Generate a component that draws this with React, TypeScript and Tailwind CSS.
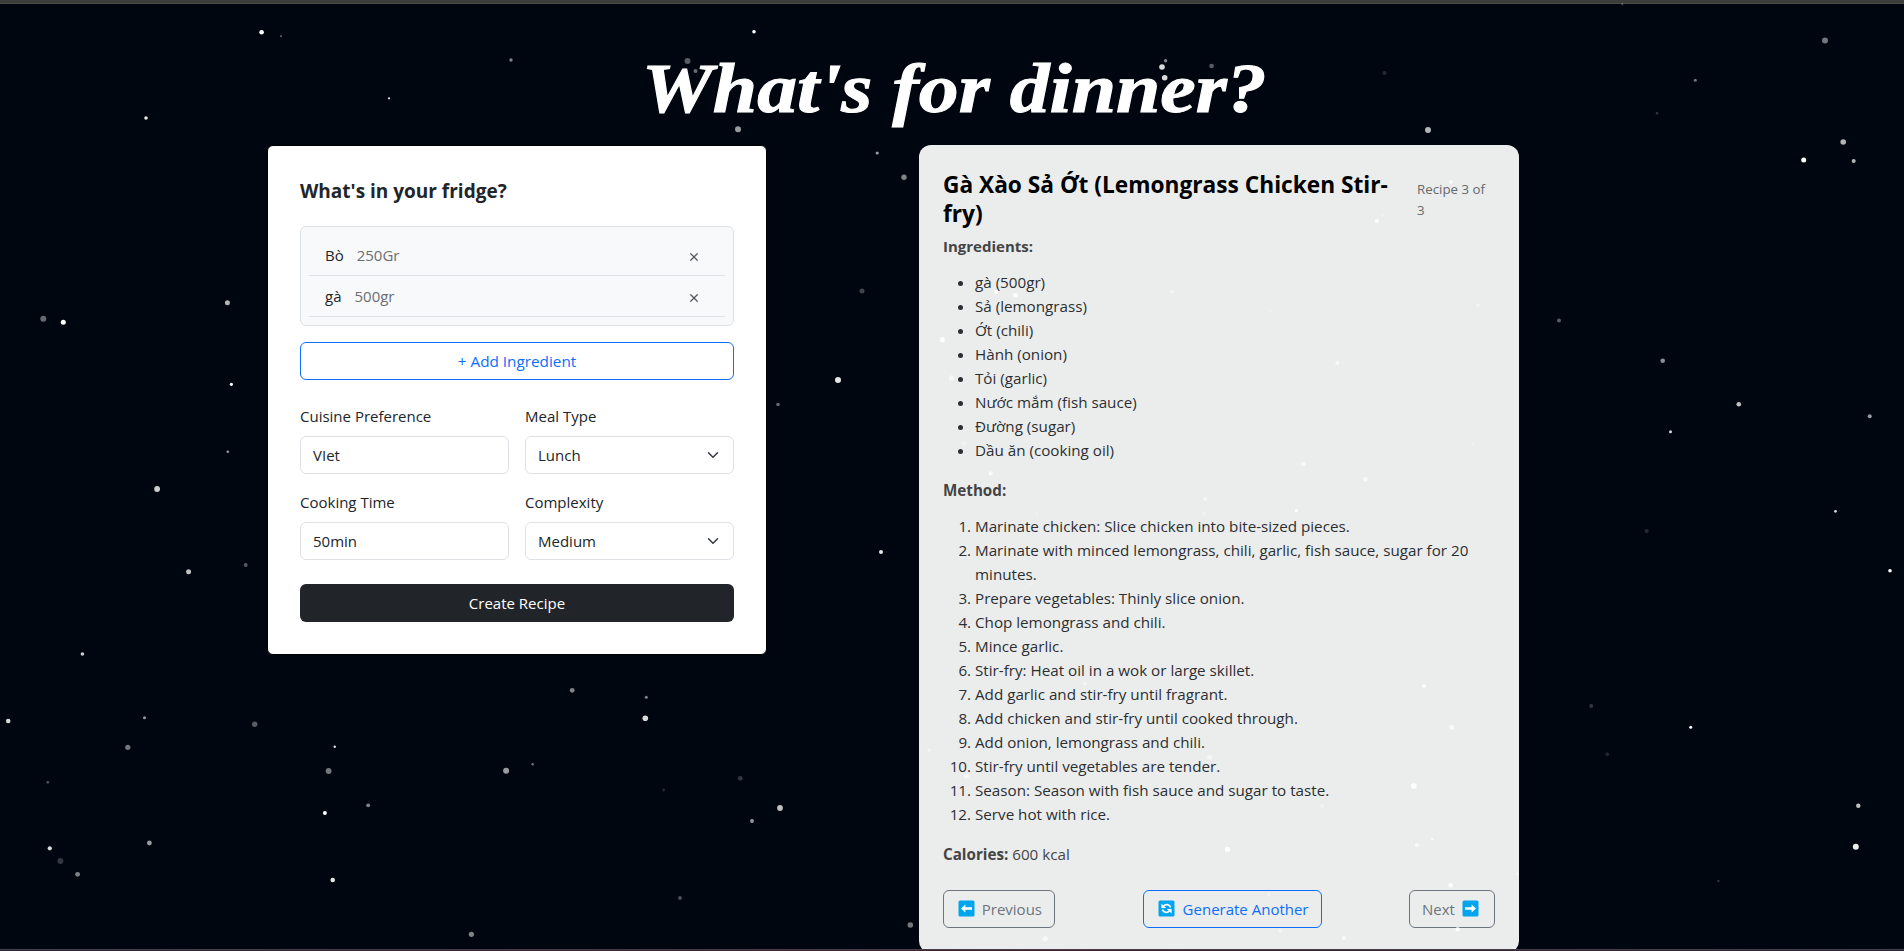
import React from "react";

type Star = [x: number, y: number, r: number, o: number];

const STARS: Star[] = [
  [261.6, 32.3, 2.3, 1], [281, 36.3, 1, 0.4], [511, 60, 1.7, 0.5], [389, 98.3, 1.1, 0.9], [146, 118, 1.8, 0.9],
  [227.4, 302.7, 2.5, 0.7], [43.3, 318.7, 3, 0.4], [63.3, 322.3, 2.5, 1], [231.4, 384.3, 1.6, 1], [227.8, 451.7, 1.3, 0.6],
  [157.1, 489, 2.9, 0.8], [188.6, 571.7, 2.5, 0.75], [245.7, 565, 1.9, 0.35], [82.4, 654, 1.8, 0.8], [8.2, 721, 2.3, 0.85],
  [144.5, 717.7, 1.5, 0.6], [254.7, 724.3, 2.7, 0.35], [127.8, 747.3, 2.6, 0.45], [334.7, 746.7, 1.2, 0.9], [328.6, 771, 2.9, 0.45],
  [47.8, 782.3, 1.4, 0.3], [324.9, 813, 2, 1], [368.2, 805.3, 1.9, 0.5], [49.8, 848.3, 2.1, 0.85], [149.4, 843, 2.4, 0.6],
  [60.4, 861, 2.9, 0.2], [77.6, 874.3, 2.4, 0.5], [332.7, 880, 2.3, 0.9], [471.4, 934.3, 2.6, 0.5], [506.1, 770.7, 3, 0.6],
  [532.7, 764.3, 1.2, 0.45], [572.2, 690.3, 2.4, 0.5], [881, 552, 2, 0.9], [646.3, 697.3, 1.5, 0.5], [645.3, 718.3, 2.8, 0.85],
  [740.3, 778.3, 2.4, 0.2], [663.7, 790, 1.4, 0.15], [780, 808, 2.9, 0.75], [752, 821, 1.9, 0.6], [680, 898, 1.9, 0.3],
  [910.3, 925, 2.8, 0.45], [1825, 40.5, 3, 0.45], [1695.3, 80.3, 1.5, 0.45], [1657, 113.3, 1.2, 0.2], [1843.2, 142, 2.8, 0.7],
  [1803.7, 160, 2.5, 1], [1853.7, 161, 2, 0.7], [1559, 320.5, 2, 0.35], [1662.7, 360.7, 2.3, 0.55], [1738.8, 404.3, 2.3, 0.75],
  [1869.7, 416.3, 2, 0.6], [1670.5, 431.7, 1.5, 0.85], [1622.3, 4.3, 1, 0.3], [1835.5, 511.3, 1.4, 0.85], [1646.7, 531, 2, 0.15],
  [1890, 570.7, 1.8, 1], [1591.3, 706, 1.9, 0.2], [1690.7, 727.3, 1.5, 1], [1607.3, 754.3, 1.7, 0.15], [1858.3, 805.7, 2.2, 0.75],
  [1855.8, 846.7, 3, 0.93], [1718.3, 881, 1.3, 0.18], [1517.5, 873.7, 1.5, 0.4], [754, 31.7, 1.8, 1], [687.5, 61, 3, 0.35],
  [695.5, 71, 2, 0.4], [738, 129.3, 3, 0.6], [877.2, 153, 1.6, 0.6], [904, 177.3, 2.7, 0.5], [1165.6, 60.7, 1.7, 0.5],
  [1162, 67, 2.8, 0.85], [1164.7, 77.7, 2.8, 0.85], [1211.6, 66, 2.3, 0.35], [1428, 130, 3, 0.7], [1384.5, 73, 2, 0.15],
  [838, 380, 3, 0.9], [862, 291, 2.5, 0.25], [778, 404.5, 1.8, 0.4],
  [1450.9, 182, 2, 0.6], [1377, 221, 2, 0.95], [1382.5, 215, 1.3, 0.3], [996.2, 292, 2.3, 0.9], [1015.6, 295.3, 2.3, 0.9],
  [1172.2, 291.7, 2, 0.45], [1270.2, 310.7, 1.6, 0.25], [942.4, 339.7, 2.7, 0.85], [951.5, 378, 2.7, 0.5], [1337.4, 363, 2.1, 0.55],
  [1477.8, 305.3, 2, 0.3], [964.2, 443.7, 2.1, 0.4], [1473.5, 443.7, 1.8, 0.25], [1303.4, 464, 2.2, 0.7],
  [990.7, 473.3, 2.1, 0.7], [1365.5, 479.3, 2.4, 0.6], [1205, 499, 2.1, 0.4], [1296.3, 510.7, 1.6, 1], [1204.2, 513.7, 1.9, 0.3],
  [1036.9, 514, 1.2, 0.3], [1031, 584, 1.2, 0.3], [1084.8, 683.7, 1.9, 0.5], [1424, 686, 2, 0.9], [1451.7, 727.3, 2.5, 0.6],
  [929, 750.3, 1.7, 0.4], [1209.7, 757.3, 2.6, 0.5], [966.5, 776.3, 2.3, 0.6], [1413.8, 786, 2.8, 1], [1322, 806, 1.9, 0.3],
  [1227.5, 849.3, 2.6, 1], [1416.9, 845, 2.1, 0.6], [1432.4, 839.3, 1.3, 0.6], [1450.6, 885.3, 2.3, 0.9], [1268.7, 894.3, 1.6, 0.4],
  [1457.7, 929.3, 2.2, 0.8], [1280.5, 930.7, 2, 0.4], [1045.2, 938.7, 2.7, 0.55], [1343.8, 938, 2, 0.7],
];

const FRIDGE = [
  { name: "Bò", qty: "250Gr" },
  { name: "gà", qty: "500gr" },
];

const INGREDIENTS = [
  "gà (500gr)", "Sả (lemongrass)", "Ớt (chili)", "Hành (onion)", "Tỏi (garlic)",
  "Nước mắm (fish sauce)", "Đường (sugar)", "Dầu ăn (cooking oil)",
];

const METHOD = [
  "Marinate chicken: Slice chicken into bite-sized pieces.",
  "Marinate with minced lemongrass, chili, garlic, fish sauce, sugar for 20 minutes.",
  "Prepare vegetables: Thinly slice onion.",
  "Chop lemongrass and chili.",
  "Mince garlic.",
  "Stir-fry: Heat oil in a wok or large skillet.",
  "Add garlic and stir-fry until fragrant.",
  "Add chicken and stir-fry until cooked through.",
  "Add onion, lemongrass and chili.",
  "Stir-fry until vegetables are tender.",
  "Season: Season with fish sauce and sugar to taste.",
  "Serve hot with rice.",
];

function StarField() {
  return (
    <svg className="pointer-events-none absolute inset-0 z-10 h-full w-full" viewBox="0 0 1904 951" fill="#fff" aria-hidden="true">
      {STARS.map(([x, y, r, o], i) => (
        <circle key={i} cx={x} cy={y} r={r} opacity={o} />
      ))}
    </svg>
  );
}

function Tile({ children }: { children: React.ReactNode }) {
  return (
    <svg className="h-[17px] w-[17px] shrink-0" viewBox="0 0 17 17" fill="none" aria-hidden="true">
      <rect x="0.5" y="0.5" width="16" height="16" rx="1.6" fill="#00a6ed" />
      {children}
    </svg>
  );
}

const ArrowLeft = () => (
  <Tile>
    <path d="M3 8.5 7.4 4.6V7.3H14V9.7H7.4V12.4Z" fill="#fff" />
  </Tile>
);

const ArrowRight = () => (
  <Tile>
    <path d="M14 8.5 9.6 4.6V7.3H3V9.7H9.6V12.4Z" fill="#fff" />
  </Tile>
);

const Cycle = () => (
  <Tile>
    <path d="M5.6 6C7.4 3.9 11.4 4 12.6 7.4M11.4 11C9.6 13.1 5.6 13 4.4 9.6" stroke="#fff" strokeWidth="1.7" />
    <path d="M3.4 3.4V8.1H8.1ZM13.6 13.6V8.9H8.9Z" fill="#fff" />
  </Tile>
);

function Field({ label, value, select }: { label: string; value: string; select?: boolean }) {
  return (
    <div className="flex flex-col gap-2">
      <span className="h-6 text-[#212529]">{label}</span>
      <div className="flex h-[38px] items-center justify-between rounded-md border border-[#dee2e6] bg-white pr-3 pl-3 text-[#212529]">
        <span>{value}</span>
        {select && (
          <svg className="h-3 w-4" viewBox="0 0 16 16" fill="none" stroke="#343a40" strokeWidth="2" strokeLinecap="round" strokeLinejoin="round">
            <path d="m2 5 6 6 6-6" />
          </svg>
        )}
      </div>
    </div>
  );
}

function FridgeCard() {
  return (
    <section className="h-[510px] w-[500px] shrink-0 rounded-md border border-black bg-white p-8 text-[15px]">
      <h2 className="mt-[1px] text-[19px] leading-6 font-bold text-[#212529]">What's in your fridge?</h2>
      <ul className="mt-[23px] rounded-md border border-[#dee2e6] bg-[#f8f9fb] p-2">
        {FRIDGE.map((item) => (
          <li key={item.name} className="flex h-[41px] items-center border-b border-[#dee2e6] px-4 text-[#212529]">
            <span>{item.name}</span>
            <span className="ml-[13px] text-[#6b6e71]">{item.qty}</span>
            <svg className="mt-1 mr-[11px] ml-auto h-2 w-2" viewBox="0 0 8 8" fill="none" stroke="#55585c" strokeWidth="1.3">
              <path d="M.4.4 7.6 7.6M7.6.4.4 7.6" />
            </svg>
          </li>
        ))}
      </ul>
      <button className="mt-4 flex h-[38px] w-full items-center justify-center rounded-md border border-[#0d6efd] text-[15.3px] text-[#0d6efd]">
        + Add Ingredient
      </button>
      <div className="mt-6 grid grid-cols-2 gap-4">
        <Field label="Cuisine Preference" value="VIet" />
        <Field label="Meal Type" value="Lunch" select />
        <Field label="Cooking Time" value="50min" />
        <Field label="Complexity" value="Medium" select />
      </div>
      <button className="mt-6 flex h-[38px] w-full items-center justify-center rounded-md bg-[#212529] text-white">
        Create Recipe
      </button>
    </section>
  );
}

function RecipeCard() {
  return (
    <section className="h-[808px] w-[600px] shrink-0 rounded-xl bg-[#ebedec] p-6 text-[15.2px]">
      <header className="mt-0.5 flex items-center justify-between">
        <h2 className="w-[450px] text-[22.7px] leading-[28.8px] font-bold text-black">
          Gà Xào Sả Ớt (Lemongrass Chicken Stir-fry)
        </h2>
        <p className="w-[78px] text-[13.3px] leading-[21px] text-[#66696c]">Recipe 3 of 3</p>
      </header>
      <p className="mt-[5px] text-[15px] leading-6 font-bold text-[#444]">Ingredients:</p>
      <ul className="mt-3 list-disc pl-8 leading-6 text-[#2b2f33]">
        {INGREDIENTS.map((item) => (
          <li key={item}>{item}</li>
        ))}
      </ul>
      <p className="mt-4 leading-6 font-bold text-[#444]">Method:</p>
      <ol className="mt-3 list-decimal pl-8 leading-6 text-[#2b2f33]">
        {METHOD.map((step) => (
          <li key={step}>{step}</li>
        ))}
      </ol>
      <p className="mt-4 leading-6 text-[#444]">
        <b>Calories:</b> 600 kcal
      </p>
      <div className="mt-6 flex items-center justify-between text-[15px] whitespace-nowrap">
        <button className="flex h-[38px] w-[112px] items-center justify-between rounded-md border border-[#6c757d] pr-[12px] pl-[14px] text-[#6c757d]">
          <ArrowLeft />
          Previous
        </button>
        <button className="flex h-[38px] w-[179px] items-center justify-between rounded-md border border-[#0d6efd] pr-[12px] pl-[14px] text-[#0d6efd]">
          <Cycle />
          Generate Another
        </button>
        <button className="flex h-[38px] w-[86px] items-center justify-between rounded-md border border-[#6c757d] pr-[15px] pl-[12px] text-[#6c757d]">
          Next
          <ArrowRight />
        </button>
      </div>
    </section>
  );
}

export default function App() {
  return (
    <div className="relative flex h-[951px] w-[1904px] flex-col overflow-hidden bg-[#00060f] font-['Open_Sans','Noto_Sans',sans-serif] text-base leading-6">
      <div className="h-1 shrink-0 border-b border-[#4b4b4a] bg-[#3c3c3b]" />
      <main className="flex h-[945px] shrink-0 flex-col overflow-hidden">
        <h1 className="mt-[46px] flex h-[77px] shrink-0 scale-x-[1.147] items-center justify-center pl-1 text-[69.5px] leading-none font-bold whitespace-nowrap text-white italic font-['Liberation_Serif',serif] [-webkit-text-stroke:1px_white]">
          What's for dinner?
        </h1>
        <div className="mt-[18px] flex shrink-0 items-start gap-[152px] pl-[267px]">
          <FridgeCard />
          <RecipeCard />
        </div>
      </main>
      <div className="h-0.5 shrink-0 border-t border-[#45404b] bg-linear-to-r from-[#2b2433] via-[#4a1f2b] to-[#2b2433]" />
      <StarField />
    </div>
  );
}
